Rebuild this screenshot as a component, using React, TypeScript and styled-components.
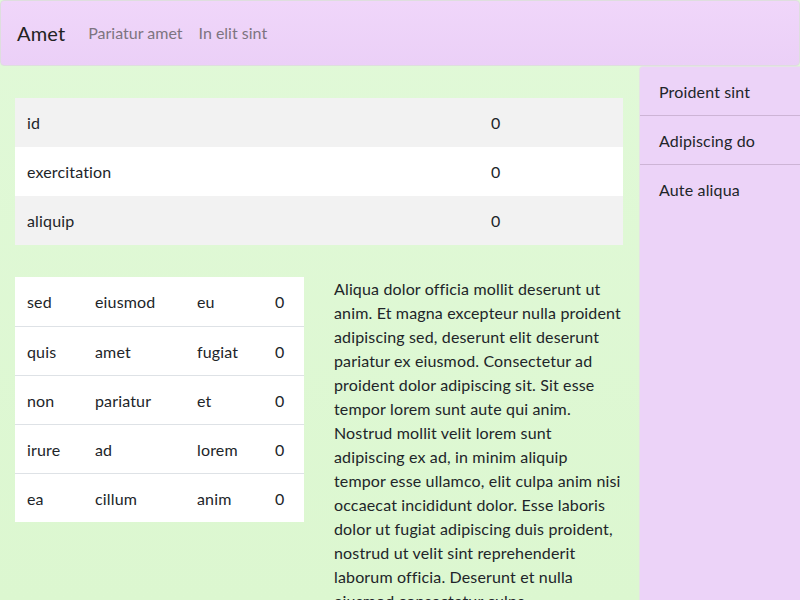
import React from "react";
import styled, { createGlobalStyle } from "styled-components";

const Global = createGlobalStyle`
  html, body { margin: 0; padding: 0; }
  body {
    font-family: "Lato", "Liberation Sans", sans-serif;
    font-size: 16px;
    line-height: 24px;
    letter-spacing: 0.15px;
    color: #212529;
    background: linear-gradient(180deg, #e1f9d8 0%, #dcf7d0 100%);
    min-height: 600px;
  }
  * { box-sizing: border-box; }
`;

const Page = styled.div`
  width: 800px;
  height: 600px;
  overflow: hidden;
  display: flex;
  flex-direction: column;
`;

const NavBar = styled.header`
  height: 66px;
  flex: none;
  display: flex;
  align-items: center;
  padding: 0 16px;
  border: 1px solid #dedede;
  border-radius: 4px;
  background: linear-gradient(180deg, #f0d6fa 0%, #ebd0f7 100%);
`;

const Brand = styled.span`
  font-size: 20px;
  color: #222;
  margin-right: 15px;
`;

const NavLink = styled.a`
  font-size: 16px;
  letter-spacing: 0;
  color: #7d7480;
  padding: 0 8px;
  text-decoration: none;
`;

const Body = styled.div`
  flex: 1;
  display: flex;
  min-height: 0;
`;

const Main = styled.main`
  flex: 1;
  padding: 32px 16px 0 15px;
  display: flex;
  flex-direction: column;
  gap: 32px;
`;

const Aside = styled.aside`
  width: 161px;
  flex: none;
  background: #ecd3f8;
  border-top-left-radius: 4px;
  border-left: 1px solid #e4e4e4;
  border-top: 1px solid #e4e4e4;
`;

const SideItem = styled.div<{ $last?: boolean }>`
  height: 49px;
  padding: 13px 19px 11px;
  border-bottom: ${(p) => (p.$last ? "none" : "1px solid #cdb4d6")};
`;

const Table = styled.table<{ $width: number }>`
  width: ${(p) => p.$width}px;
  border-collapse: collapse;
  table-layout: fixed;
  background: #fff;
`;

const Row = styled.tr<{ $striped?: boolean }>`
  background: ${(p) => (p.$striped ? "#f2f2f2" : "#fff")};
  & + & > td { border-top: 1px solid #dee2e6; }
`;

const Cell = styled.td`
  padding: 13px 12px 11px;
  height: 49px;
  line-height: 24px;
  vertical-align: top;
  white-space: nowrap;
`;

const Split = styled.div`
  display: grid;
  grid-template-columns: 289px 289px;
  gap: 30px;
  align-items: start;
`;

const Para = styled.p`
  margin: 0;
`;

const t1 = [
  ["id", "0"],
  ["exercitation", "0"],
  ["aliquip", "0"],
];
const t2 = [
  ["sed", "eiusmod", "eu", "0"],
  ["quis", "amet", "fugiat", "0"],
  ["non", "pariatur", "et", "0"],
  ["irure", "ad", "lorem", "0"],
  ["ea", "cillum", "anim", "0"],
];

export default function App() {
  return (
    <Page>
      <Global />
      <NavBar>
        <Brand>Amet</Brand>
        <NavLink href="#">Pariatur amet</NavLink>
        <NavLink href="#">In elit sint</NavLink>
      </NavBar>
      <Body>
        <Main>
          <Table $width={608}>
            <colgroup>
              <col style={{ width: 464 }} />
              <col style={{ width: 144 }} />
            </colgroup>
            <tbody>
              {t1.map((r, i) => (
                <Row key={i} $striped={i % 2 === 0}>
                  {r.map((c, j) => (
                    <Cell key={j}>{c}</Cell>
                  ))}
                </Row>
              ))}
            </tbody>
          </Table>
          <Split>
            <Table $width={289}>
              <colgroup>
                <col style={{ width: 68 }} />
                <col style={{ width: 102 }} />
                <col style={{ width: 78 }} />
                <col style={{ width: 41 }} />
              </colgroup>
              <tbody>
                {t2.map((r, i) => (
                  <Row key={i}>
                    {r.map((c, j) => (
                      <Cell key={j}>{c}</Cell>
                    ))}
                  </Row>
                ))}
              </tbody>
            </Table>
            <Para>
              Aliqua dolor officia mollit deserunt ut anim. Et magna excepteur nulla proident
              adipiscing sed, deserunt elit deserunt pariatur ex eiusmod. Consectetur ad proident
              dolor adipiscing sit. Sit esse tempor lorem sunt aute qui anim. Nostrud mollit velit
              lorem sunt adipiscing ex ad, in minim aliquip tempor esse ullamco, elit culpa anim nisi
              occaecat incididunt dolor. Esse laboris dolor ut fugiat adipiscing duis proident,
              nostrud ut velit sint reprehenderit laborum officia. Deserunt et nulla eiusmod
              consectetur culpa.
            </Para>
          </Split>
        </Main>
        <Aside>
          <SideItem>Proident sint</SideItem>
          <SideItem>Adipiscing do</SideItem>
          <SideItem $last>Aute aliqua</SideItem>
        </Aside>
      </Body>
    </Page>
  );
}
